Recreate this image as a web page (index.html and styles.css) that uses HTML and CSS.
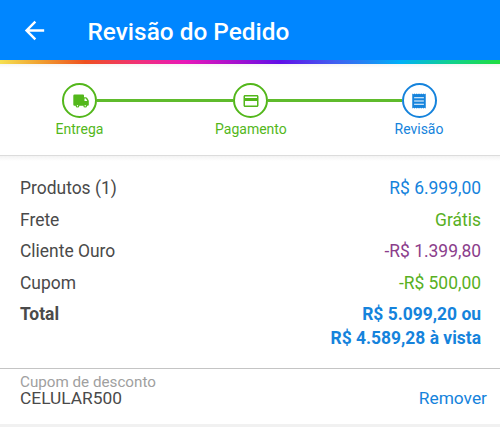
FILE: index.html
```html
<!DOCTYPE html>
<html lang="pt-BR">
<head>
    <meta charset="UTF-8">
    <meta name="viewport" content="width=device-width, initial-scale=1.0">
    <title>Revisão do Pedido</title>
    <link rel="stylesheet" href="styles.css">
</head>
<body>
    <header class="top-bar">
        <svg class="back" viewBox="0 0 24 24"><path d="M20 11H7.83l5.59-5.59L12 4l-8 8 8 8 1.41-1.41L7.83 13H20v-2z"/></svg>
        <h1>Revisão do Pedido</h1>
    </header>
    <div class="rainbow"></div>

    <!-- Checkout steps -->
    <nav class="steps">
        <div class="step">
            <div class="circle">
                <svg class="truck" viewBox="0 0 16 14">
                    <path d="M1.500 0.500H10Q11 0.500 11 1.500V3.300H12.800Q13.600 3.300 14.200 4.100L15.300 5.800Q15.800 6.500 15.800 7.300V10.800Q15.800 11.800 14.600 11.800H1.500Q0.300 11.800 0.300 10.600V1.700Q0.300 0.500 1.500 0.500Z"/>
                    <path class="hole" d="M11.500 4.500h1.300l1.500 2.500h-2.800z"/>
                    <circle class="wheel" cx="4.500" cy="11.700" r="1.300"/>
                    <circle class="wheel" cx="12.200" cy="11.700" r="1.300"/>
                </svg>
            </div>
            <span>Entrega</span>
        </div>
        <div class="line first"></div>
        <div class="step">
            <div class="circle">
                <svg viewBox="0 0 24 24"><path d="M20 4H4c-1.110 0-1.990.89-1.990 2L2 18c0 1.110.89 2 2 2h16c1.110 0 2-.89 2-2V6c0-1.110-.89-2-2-2zm0 14H4v-6h16v6zm0-10H4V6h16v2z"/></svg>
            </div>
            <span>Pagamento</span>
        </div>
        <div class="line"></div>
        <div class="step current">
            <div class="circle">
                <svg viewBox="0 0 24 24">
                    <path d="M3 22l1.500-1L6 22l1.500-1L9 22l1.500-1L12 22l1.500-1L15 22l1.500-1L18 22l1.500-1L21 22V2l-1.500 1L18 2l-1.500 1L15 2l-1.500 1L12 2l-1.500 1L9 2 7.500 3 6 2 4.500 3 3 2z"/>
                    <path class="hole" d="M5.500 7h13v1.400h-13zM5.500 11.300h13v1.400h-13zM5.500 15.600h13V17h-13z"/>
                </svg>
            </div>
            <span>Revisão</span>
        </div>
    </nav>

    <!-- Order values -->
    <section class="summary">
        <div class="row"><span>Produtos (1)</span><span class="blue">R$ 6.999,00</span></div>
        <div class="row"><span>Frete</span><span class="green">Grátis</span></div>
        <div class="row"><span>Cliente Ouro</span><span class="purple">-R$ 1.399,80</span></div>
        <div class="row"><span>Cupom</span><span class="green">-R$ 500,00</span></div>
        <div class="row total"><span>Total</span><span class="blue">R$ 5.099,20 ou<br>R$ 4.589,28 à vista</span></div>
    </section>

    <section class="coupon">
        <div>
            <div class="coupon-label">Cupom de desconto</div>
            <div class="coupon-code">CELULAR500</div>
        </div>
        <a class="remove">Remover</a>
    </section>
</body>
</html>
```
FILE: styles.css
```css
* {
    box-sizing: border-box;
}
body {
    margin: 0;
    height: 427px;
    overflow: hidden;
    background-color: #f1f1f1;
    font-family: Roboto, sans-serif;
    color: #4a4a4a;
}
.top-bar {
    display: flex;
    align-items: center;
    height: 60px;
    padding: 2px 0 0 20px;
    background-color: #0086ff;
    color: white;
}
.back {
    width: 29px;
    height: 29px;
    margin: -2px 38.500px 0 0;
    fill: white;
}
.top-bar h1 {
    margin: 0;
    font-size: 24.400px;
    font-weight: 500;
}
.rainbow {
    height: 4px;
    background: linear-gradient(to right, #f5e050 0, #f0a030 8%, #ee5020 17%, #f0307a 28%, #e818b8 37%, #a010d0 48%, #6010e8 56%, #4060f0 67%, #00b0f8 80%, #10d090 90%, #20dd40 100%);
}
.steps {
    display: flex;
    height: 91px;
    padding: 19px 44.500px 0 43px;
    background: linear-gradient(#f5f5f5, white 4px);
    color: #53b71b;
}
.step {
    display: flex;
    flex-direction: column;
    align-items: center;
    width: 73px;
    font-size: 14px;
    line-height: 18px;
}
.step span {
    margin-top: 2px;
}
.circle {
    display: flex;
    align-items: center;
    justify-content: center;
    width: 35px;
    height: 35px;
    border: 2px solid currentColor;
    border-radius: 50%;
}
.circle svg {
    width: 18px;
    height: 18px;
    fill: currentColor;
}
.circle .truck {
    width: 16px;
    height: 14px;
    margin-left: 2px;
}
.circle .hole {
    fill: white;
}
.wheel {
    fill: white;
    stroke: currentColor;
    stroke-width: 1.200px;
}
.current {
    color: #1583dc;
}
.line {
    flex: 1;
    height: 3px;
    margin: 16px -19px 0;
    background-color: #5fbb2c;
}
.line.first {
    flex: 1.025;
}
.summary {
    height: 214px;
    padding: 20px 19px 0 20px;
    border-top: 1px solid #dcdcdc;
    border-bottom: 1px solid #c4c4c4;
    background: linear-gradient(#f3f3f3, white 5px);
    font-size: 17.450px;
}
.row {
    display: flex;
    justify-content: space-between;
    margin-bottom: 7.500px;
    line-height: 24px;
    text-align: right;
}
.total {
    font-weight: bold;
}
.blue {
    color: #1583dc;
}
.green {
    color: #58b022;
}
.purple {
    color: #8b3d8b;
}
.coupon {
    display: flex;
    justify-content: space-between;
    align-items: flex-start;
    height: 55px;
    padding: 5px 13px 0 20px;
    background-color: white;
}
.coupon-label {
    font-size: 15.200px;
    line-height: 16px;
    color: #a0a0a0;
}
.coupon-code {
    font-size: 17.350px;
    line-height: 16px;
}
.remove {
    margin-top: 13px;
    font-size: 17.350px;
    line-height: 22px;
    color: #1583dc;
}
```
